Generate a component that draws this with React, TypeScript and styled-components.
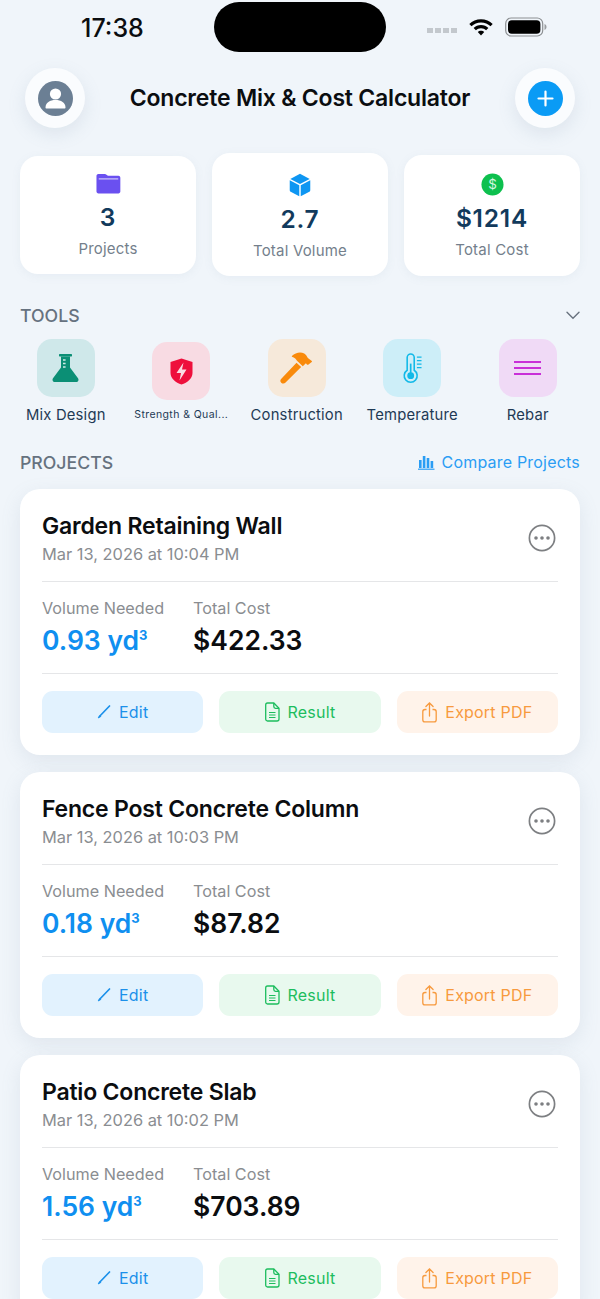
import React from 'react';
import styled, { createGlobalStyle } from 'styled-components';

const GlobalStyle = createGlobalStyle`
  html, body {
    margin: 0;
    padding: 0;
    height: 1299px;
    overflow: hidden;
    background: #f0f5fa;
    font-family: Inter, "Liberation Sans", sans-serif;
  }
  * { box-sizing: border-box; }
`;

const Screen = styled.div`
  width: 600px;
  height: 1299px;
  overflow: hidden;
  background: #f0f5fa;
`;

const StatusBar = styled.div`
  height: 54px;
  padding-top: 2px;
  display: grid;
  grid-template-columns: 214px 172px 214px;
`;

const Time = styled.div`
  font-size: 25px;
  font-weight: 500;
  color: #0b0d10;
  padding: 12px 0 0 81px;
  line-height: 29px;
`;

const Island = styled.div`
  height: 50px;
  background: #000;
  border-radius: 25px;
`;

const StatusIcons = styled.div`
  display: flex;
  align-items: center;
  padding: 0 0 0 41px;
  height: 50px;
`;

const SignalDots = styled.div`
  display: flex;
  gap: 2px;
  margin: 7px 11px 0 0;
`;

const Dot = styled.span`
  width: 6px;
  height: 5px;
  background: #c3c8cd;
`;

const Header = styled.div`
  display: flex;
  align-items: center;
  justify-content: space-between;
  padding: 0 25px;
  margin-top: 14px;
`;

const RoundButton = styled.div`
  width: 60px;
  height: 60px;
  border-radius: 50%;
  background: #fafcfe;
  box-shadow: 0 6px 18px rgba(120, 140, 165, 0.16);
  display: flex;
  align-items: center;
  justify-content: center;
`;

const Title = styled.h1`
  margin: 0;
  font-size: 23px;
  font-weight: 600;
  color: #0b0d10;
  letter-spacing: -0.2px;
`;

const StatsRow = styled.div`
  display: grid;
  grid-template-columns: repeat(3, 176px);
  gap: 16px;
  padding: 0 20px;
  margin-top: 25px;
  align-items: start;
`;

const StatCard = styled.div<{ $top: number; $height: number; $pad: number }>`
  margin-top: ${(p) => p.$top}px;
  height: ${(p) => p.$height}px;
  background: #fff;
  border-radius: 18px;
  box-shadow: 0 2px 10px rgba(120, 140, 165, 0.08);
  display: flex;
  flex-direction: column;
  align-items: center;
  padding-top: ${(p) => p.$pad}px;
`;

const StatIcon = styled.div`
  height: 24px;
  display: flex;
  align-items: center;
  justify-content: center;
`;

const StatValue = styled.div`
  margin-top: 8px;
  font-size: 24.5px;
  line-height: 28px;
  font-weight: 600;
  letter-spacing: 0.8px;
  color: #123a5c;
`;

const StatLabel = styled.div`
  margin-top: 8px;
  font-size: 15px;
  line-height: 20px;
  color: #747f8c;
  letter-spacing: 0.2px;
`;

const SectionHead = styled.div<{ $top: number }>`
  display: flex;
  align-items: center;
  justify-content: space-between;
  padding: 0 20px;
  height: 24px;
  margin-top: ${(p) => p.$top}px;
`;

const SectionTitle = styled.div`
  font-size: 17.7px;
  font-weight: 500;
  color: #66727f;
`;

const ToolsRow = styled.div`
  display: grid;
  grid-template-columns: repeat(5, 115.5px);
  padding-left: 8px;
  margin-top: 12px;
`;

const Tool = styled.div`
  display: flex;
  flex-direction: column;
  align-items: center;
`;

const ToolTile = styled.div<{ $bg: string; $shift?: number }>`
  width: 58px;
  height: 58px;
  border-radius: 15px;
  background: ${(p) => p.$bg};
  margin-top: ${(p) => p.$shift ?? 0}px;
  margin-bottom: ${(p) => 3 - (p.$shift ?? 0)}px;
  display: flex;
  align-items: center;
  justify-content: center;
`;

const ToolLabel = styled.div<{ $small?: boolean }>`
  margin-top: 3px;
  height: 24px;
  line-height: 24px;
  white-space: nowrap;
  font-size: ${(p) => (p.$small ? '10.5px' : '14.8px')};
  letter-spacing: ${(p) => (p.$small ? '0.4px' : '0.2px')};
  color: #1f3a55;
`;

const CompareLink = styled.div`
  display: flex;
  align-items: center;
  gap: 7px;
  font-size: 16px;
  letter-spacing: 0.2px;
  color: #2a9df4;
`;

const Cards = styled.div`
  display: flex;
  flex-direction: column;
  gap: 17px;
  padding: 0 20px;
  margin-top: 15px;
`;

const Card = styled.div`
  background: #fff;
  border-radius: 20px;
  box-shadow: 0 6px 20px rgba(120, 140, 165, 0.14);
  padding: 0 22px;
  height: 266px;
  flex: none;
`;

const CardTop = styled.div`
  height: 93px;
  border-bottom: 1px solid #e5e6e8;
  display: flex;
  align-items: center;
  justify-content: space-between;
  padding: 5px 2px 0 0;
`;

const CardName = styled.div`
  font-size: 23px;
  line-height: 28px;
  font-weight: 600;
  color: #0b0d10;
  letter-spacing: -0.2px;
`;

const CardDate = styled.div`
  margin-top: 4px;
  font-size: 16.4px;
  line-height: 20px;
  color: #8a8d91;
`;

const Metrics = styled.div`
  height: 92px;
  border-bottom: 1px solid #e5e6e8;
  display: flex;
  gap: 29px;
  padding-top: 15px;
`;

const MetricLabel = styled.div`
  font-size: 16.2px;
  line-height: 22px;
  color: #8a8d91;
`;

const MetricValue = styled.div<{ $color: string }>`
  margin-top: 5px;
  font-size: 26.5px;
  line-height: 32px;
  font-weight: 600;
  color: ${(p) => p.$color};
  sup {
    font-size: 13px;
    font-weight: 700;
    line-height: 0;
    vertical-align: 10px;
  }
`;

const Actions = styled.div`
  display: grid;
  grid-template-columns: repeat(3, 1fr);
  gap: 16px;
  margin-top: 17px;
`;

const ActionButton = styled.div<{ $bg: string; $color: string }>`
  height: 42px;
  border-radius: 11px;
  background: ${(p) => p.$bg};
  color: ${(p) => p.$color};
  font-size: 16px;
  letter-spacing: 0.2px;
  display: flex;
  align-items: center;
  justify-content: center;
  gap: 8px;
`;

const WifiIcon = () => (
  <svg width="26" height="20" viewBox="0 0 26 20">
    <path d="M13 2.2C8.4 2.2 4.3 4 1.3 7l2.2 2.3C6 6.9 9.3 5.4 13 5.4s7 1.5 9.5 3.9L24.7 7C21.7 4 17.6 2.2 13 2.2z" fill="#000" />
    <path d="M13 8c-2.9 0-5.5 1.1-7.4 3l2.3 2.3c1.3-1.3 3.1-2.1 5.1-2.1s3.8.8 5.1 2.1l2.3-2.3C18.5 9.1 15.9 8 13 8z" fill="#000" />
    <path d="M13 13.8c-1.3 0-2.4.5-3.2 1.3l3.2 3.5 3.2-3.5c-.8-.8-1.9-1.3-3.2-1.3z" fill="#000" />
  </svg>
);

const BatteryIcon = styled.svg`
  margin-left: 11px;
`;

const UserIcon = () => (
  <svg width="35" height="35" viewBox="0 0 35 35">
    <circle cx="17.5" cy="17.5" r="17.5" fill="#6b7f94" />
    <circle cx="17.5" cy="13" r="5.6" fill="#fff" />
    <path d="M7.5 26.5c0-5 4.5-7.6 10-7.6s10 2.6 10 7.6c0 .6-.4 1-1 1h-18c-.6 0-1-.4-1-1z" fill="#fff" />
  </svg>
);

const PlusIcon = () => (
  <svg width="35" height="35" viewBox="0 0 35 35">
    <circle cx="17.5" cy="17.5" r="17.5" fill="#0a9bf5" />
    <path d="M17.5 10.5v14M10.5 17.5h14" stroke="#fff" strokeWidth="2.2" strokeLinecap="round" />
  </svg>
);

const FolderIcon = () => (
  <svg width="25" height="21" viewBox="0 0 26 22">
    <path d="M2.5 1h6.6c.7 0 1.3.3 1.8.8L12.4 3h11c1.1 0 2 .9 2 2v14.5c0 1.1-.9 2-2 2h-21c-1.1 0-2-.9-2-2V3c0-1.1.9-2 2-2z" fill="#6a50f0" />
    <path d="M2.8 6.2h20.4" stroke="#e9e5fd" strokeWidth="1" />
  </svg>
);

const CubeIcon = () => (
  <svg width="22" height="24" viewBox="0 0 24 26">
    <path d="M12 .8l10.6 5.6L12 12 1.4 6.4z" fill="#0e96f2" />
    <path d="M.8 7.8L11.2 13.4v12L1.8 20.3c-.6-.3-1-1-1-1.7z" fill="#0e96f2" />
    <path d="M23.2 7.8L12.8 13.4v12l9.4-5.1c.6-.3 1-1 1-1.7z" fill="#0e96f2" />
  </svg>
);

const DollarIcon = () => (
  <svg width="23" height="23" viewBox="0 0 24 24">
    <circle cx="12" cy="12" r="11.5" fill="#0dc04e" />
    <text x="12" y="17" textAnchor="middle" fontSize="14" fill="#d8f7e3" fontFamily="Inter, sans-serif">$</text>
  </svg>
);

const FlaskIcon = () => (
  <svg width="27" height="28" viewBox="0 0 27 28">
    <rect x="7" y="0" width="13" height="2.4" rx="0.6" fill="#0b8f75" />
    <path d="M9 2.400h9v11l8 10.800c1.200 1.800 0 3.800-2 3.800H3c-2 0-3.200-2-2-3.800l8-10.800z" fill="#0b8f75" />
    <path d="M11 6h2.600M11 9.500h2.600M11 13h2.600" stroke="#cfeae6" strokeWidth="1.300" />
  </svg>
);

const ShieldIcon = () => (
  <svg width="23" height="27" viewBox="0 0 23 27">
    <path d="M11.500.5L22.500 4v11c0 5.500-5 9.500-11 11.500C5.500 24.500.5 20.500.5 15V4z" fill="#ee0f3c" />
    <path d="M13.500 4.500L6.500 15H11l-1.500 7.500 7-11H12z" fill="#f9dce2" />
  </svg>
);

const HammerIcon = () => (
  <svg width="33" height="32" viewBox="0 0 32 34" preserveAspectRatio="none">
    <path d="M16 11.500l4.500 4.500L5.400 32.500c-1.200 1.300-3 1.300-4.200.1-1.200-1.200-1.200-3 .1-4.200z" fill="#f98a0b" />
    <path d="M11.500 4.200C15 .6 20 -.5 23.500 1.700c1.800 1.100 2.600 3 3.500 4.700l3.200 2.600c1 .8 1.100 1.200.2 2l-2.700 2.200c-.7.500-1.300.5-1.800-.2l-.8-1-3 3.200-5.600-5.800c-.6-1.600-2.300-3.800-5-4.400z" fill="#f98a0b" />
  </svg>
);

const ThermometerIcon = () => (
  <svg width="19" height="30" viewBox="0 0 20.500 31.500">
    <path d="M4.500 4.500a3.800 3.800 0 0 1 7.600 0v13.700a7 7 0 1 1-7.600 0z" fill="none" stroke="#12b9e8" strokeWidth="1.700" />
    <circle cx="8.300" cy="24" r="3.700" fill="#12b9e8" />
    <path d="M8.300 11v11" stroke="#12b9e8" strokeWidth="1.800" />
    <path d="M15 4h5M15 7.800h5M15 11.600h5M15 15.400h5" stroke="#12b9e8" strokeWidth="1.500" />
  </svg>
);

const LinesIcon = () => (
  <svg width="27" height="14" viewBox="0 0 27 14">
    <path d="M0 1h27M0 7h27M0 13h27" stroke="#c92fd8" strokeWidth="2" />
  </svg>
);

const BarsIcon = () => (
  <svg width="17" height="15" viewBox="0 0 17 15">
    <path d="M1 5h2.600v8H1zM4.800 1h2.600v12H4.800zM8.700 3h2.600v10H8.700zM12.600 6H15.200v7h-2.600z" fill="#2a9df4" />
    <path d="M0 14.200h16.500" stroke="#2a9df4" strokeWidth="1.200" />
  </svg>
);

const ChevronIcon = () => (
  <svg width="14" height="9" viewBox="0 0 14 9">
    <path d="M1 1.300l6 6 6-6" fill="none" stroke="#68727e" strokeWidth="1.400" strokeLinecap="round" />
  </svg>
);

const MoreIcon = () => (
  <svg width="28" height="28" viewBox="0 0 28 28">
    <circle cx="14" cy="14" r="12.600" fill="none" stroke="#7d7f82" strokeWidth="1.700" />
    <circle cx="8" cy="14" r="1.800" fill="#7d7f82" />
    <circle cx="14" cy="14" r="1.800" fill="#7d7f82" />
    <circle cx="20" cy="14" r="1.800" fill="#7d7f82" />
  </svg>
);

const PencilIcon = () => (
  <svg width="14" height="14" viewBox="0 0 14 14">
    <path d="M12.500 1L2.400 11.500" stroke="#1b90ea" strokeWidth="1.700" strokeLinecap="round" />
    <path d="M3.200 10.400L1 13l2.800-1.400z" fill="#1b90ea" stroke="#1b90ea" strokeWidth="0.800" />
  </svg>
);

const DocIcon = () => (
  <svg width="15" height="20" viewBox="0 0 15 20">
    <path d="M2.500 1h6.300L14 6.300v10.700c0 1.100-.9 2-2 2H2.500c-1.100 0-1.800-.9-1.800-2V3c0-1.100.7-2 1.800-2z" fill="none" stroke="#1dbd5e" strokeWidth="1.300" />
    <path d="M8.800 1v3.500c0 1 .7 1.800 1.700 1.800H14" fill="none" stroke="#1dbd5e" strokeWidth="1.300" />
    <path d="M4 10.500h6.500M4 13h6.500M4 15.500h6.500" stroke="#1dbd5e" strokeWidth="1.100" />
  </svg>
);

const ShareIcon = () => (
  <svg width="15" height="21" viewBox="0 0 15 21">
    <path d="M4.500 7.500H3c-1.300 0-2.200.9-2.200 2.200v8c0 1.300.9 2.200 2.200 2.200h9c1.300 0 2.200-.9 2.200-2.200v-8c0-1.300-.9-2.200-2.200-2.200h-1.500" fill="none" stroke="#f79a3e" strokeWidth="1.300" />
    <path d="M7.500 14V1.200M3.900 4.500l3.600-3.500 3.600 3.500" fill="none" stroke="#f79a3e" strokeWidth="1.300" strokeLinecap="round" />
  </svg>
);

const stats = [
  { icon: <FolderIcon />, value: '3', label: 'Projects', top: 3, height: 118, pad: 15 },
  { icon: <CubeIcon />, value: '2.7', label: 'Total Volume', top: 0, height: 123, pad: 20 },
  { icon: <DollarIcon />, value: '$1214', label: 'Total Cost', top: 2, height: 121, pad: 17 },
];

const tools = [
  { icon: <FlaskIcon />, bg: '#cfe8ea', label: 'Mix Design', shift: 0 },
  { icon: <ShieldIcon />, bg: '#f8dbe3', label: 'Strength & Qual...', shift: 3, small: true },
  { icon: <HammerIcon />, bg: '#f6e9da', label: 'Construction', shift: 0 },
  { icon: <ThermometerIcon />, bg: '#cdeef8', label: 'Temperature', shift: 0 },
  { icon: <LinesIcon />, bg: '#f0daf6', label: 'Rebar', shift: 0 },
];

const projects = [
  { name: 'Garden Retaining Wall', date: 'Mar 13, 2026 at 10:04 PM', volume: '0.93', cost: '$422.33' },
  { name: 'Fence Post Concrete Column', date: 'Mar 13, 2026 at 10:03 PM', volume: '0.18', cost: '$87.82' },
  { name: 'Patio Concrete Slab', date: 'Mar 13, 2026 at 10:02 PM', volume: '1.56', cost: '$703.89' },
];

const App = () => {
  return (
    <Screen>
      <GlobalStyle />
      <StatusBar>
        <Time>17:38</Time>
        <Island />
        <StatusIcons>
          <SignalDots>
            <Dot />
            <Dot />
            <Dot />
            <Dot />
          </SignalDots>
          <WifiIcon />
          <BatteryIcon width="42" height="22" viewBox="0 0 42 22">
            <rect x="0.7" y="2" width="37" height="18" rx="5.5" fill="none" stroke="#8c8f92" strokeWidth="1.2" />
            <rect x="3" y="4.2" width="32.4" height="13.6" rx="3.8" fill="#000" />
            <path d="M39.5 8v6c1.2-.4 2-1.600 2-3s-.8-2.600-2-3z" fill="#9a9da0" />
          </BatteryIcon>
        </StatusIcons>
      </StatusBar>

      <Header>
        <RoundButton>
          <UserIcon />
        </RoundButton>
        <Title>Concrete Mix &amp; Cost Calculator</Title>
        <RoundButton>
          <PlusIcon />
        </RoundButton>
      </Header>

      <StatsRow>
        {stats.map((s) => (
          <StatCard key={s.label} $top={s.top} $height={s.height} $pad={s.pad}>
            <StatIcon>{s.icon}</StatIcon>
            <StatValue>{s.value}</StatValue>
            <StatLabel>{s.label}</StatLabel>
          </StatCard>
        ))}
      </StatsRow>

      <SectionHead $top={27}>
        <SectionTitle>TOOLS</SectionTitle>
        <ChevronIcon />
      </SectionHead>
      <ToolsRow>
        {tools.map((t) => (
          <Tool key={t.label}>
            <ToolTile $bg={t.bg} $shift={t.shift}>
              {t.icon}
            </ToolTile>
            <ToolLabel $small={t.small}>{t.label}</ToolLabel>
          </Tool>
        ))}
      </ToolsRow>

      <SectionHead $top={23}>
        <SectionTitle>PROJECTS</SectionTitle>
        <CompareLink>
          <BarsIcon />
          Compare Projects
        </CompareLink>
      </SectionHead>

      <Cards>
        {projects.map((p) => (
          <Card key={p.name}>
            <CardTop>
              <div>
                <CardName>{p.name}</CardName>
                <CardDate>{p.date}</CardDate>
              </div>
              <MoreIcon />
            </CardTop>
            <Metrics>
              <div>
                <MetricLabel>Volume Needed</MetricLabel>
                <MetricValue $color="#0f8ff0">
                  {p.volume} yd<sup>3</sup>
                </MetricValue>
              </div>
              <div>
                <MetricLabel>Total Cost</MetricLabel>
                <MetricValue $color="#0b0d10">{p.cost}</MetricValue>
              </div>
            </Metrics>
            <Actions>
              <ActionButton $bg="#e2f2fe" $color="#1b90ea">
                <PencilIcon />
                Edit
              </ActionButton>
              <ActionButton $bg="#e8f9ee" $color="#1dbd5e">
                <DocIcon />
                Result
              </ActionButton>
              <ActionButton $bg="#fff3ea" $color="#f79a3e">
                <ShareIcon />
                Export PDF
              </ActionButton>
            </Actions>
          </Card>
        ))}
      </Cards>
    </Screen>
  );
};

export default App;
